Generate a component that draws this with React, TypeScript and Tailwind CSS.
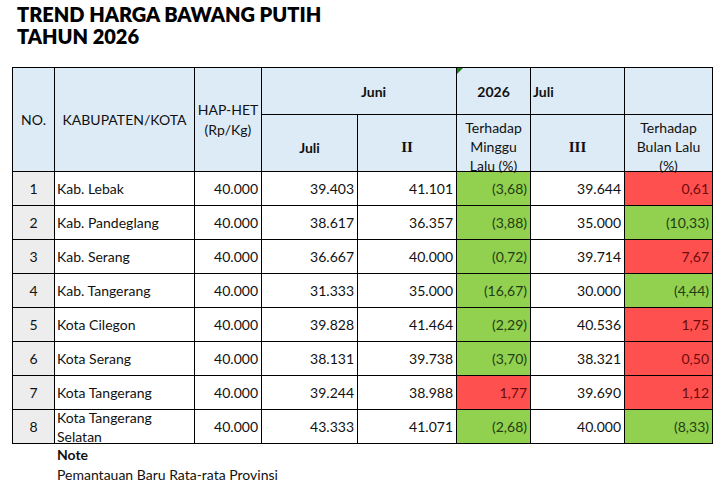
import React from "react";

type Row = {
  no: number;
  name: string[];
  hap: string;
  juli: string;
  ii: string;
  mg: string;
  mgUp: boolean;
  iii: string;
  bl: string;
  blUp: boolean;
};

const rows: Row[] = [
  { no: 1, name: ["Kab. Lebak"], hap: "40.000", juli: "39.403", ii: "41.101", mg: "(3,68)", mgUp: false, iii: "39.644", bl: "0,61", blUp: true },
  { no: 2, name: ["Kab. Pandeglang"], hap: "40.000", juli: "38.617", ii: "36.357", mg: "(3,88)", mgUp: false, iii: "35.000", bl: "(10,33)", blUp: false },
  { no: 3, name: ["Kab. Serang"], hap: "40.000", juli: "36.667", ii: "40.000", mg: "(0,72)", mgUp: false, iii: "39.714", bl: "7,67", blUp: true },
  { no: 4, name: ["Kab. Tangerang"], hap: "40.000", juli: "31.333", ii: "35.000", mg: "(16,67)", mgUp: false, iii: "30.000", bl: "(4,44)", blUp: false },
  { no: 5, name: ["Kota Cilegon"], hap: "40.000", juli: "39.828", ii: "41.464", mg: "(2,29)", mgUp: false, iii: "40.536", bl: "1,75", blUp: true },
  { no: 6, name: ["Kota Serang"], hap: "40.000", juli: "38.131", ii: "39.738", mg: "(3,70)", mgUp: false, iii: "38.321", bl: "0,50", blUp: true },
  { no: 7, name: ["Kota Tangerang"], hap: "40.000", juli: "39.244", ii: "38.988", mg: "1,77", mgUp: true, iii: "39.690", bl: "1,12", blUp: true },
  { no: 8, name: ["Kota Tangerang", "Selatan"], hap: "40.000", juli: "43.333", ii: "41.071", mg: "(2,68)", mgUp: false, iii: "40.000", bl: "(8,33)", blUp: false },
];

const font = { fontFamily: "Lato, 'Open Sans', sans-serif" };

function pctCls(up: boolean) {
  return up ? "bg-[#ff5050] text-[#6e0a0a]" : "bg-[#92d050] text-[#1f3d12]";
}

export default function App() {
  const b = "border border-black";
  return (
    <div className="w-[723px] h-[485px] bg-white text-[#111] overflow-hidden" style={font}>
      <div className="pl-[17px] pt-[3px] text-[20px] font-extrabold leading-[22px] text-black">
        <div>TREND HARGA BAWANG PUTIH</div>
        <div>TAHUN 2026</div>
      </div>
      <div className="pl-[12px] pt-[20px]">
        <table className="border-collapse table-fixed text-[14px] w-[700px]">
          <colgroup>
            <col className="w-[42px]" />
            <col className="w-[140px]" />
            <col className="w-[67px]" />
            <col className="w-[96px]" />
            <col className="w-[99px]" />
            <col className="w-[74px]" />
            <col className="w-[94px]" />
            <col className="w-[88px]" />
          </colgroup>
          <thead>
            <tr className="h-[47px] bg-[#ddebf7]">
              <th rowSpan={2} className={`${b} font-normal text-center`}>NO.</th>
              <th rowSpan={2} className={`${b} font-normal text-center`}>KABUPATEN/KOTA</th>
              <th rowSpan={2} className={`${b} font-normal text-center leading-[20px]`}>
                HAP-HET
                <br />
                (Rp/Kg)
              </th>
              <th colSpan={2} className={`${b} font-bold text-left pl-[99px]`}>Juni</th>
              <th className={`${b} font-bold text-center relative`}>
                <span className="absolute left-0 top-0 w-0 h-0 border-t-[6px] border-r-[6px] border-t-[#1e7b1e] border-r-transparent" />
                2026
              </th>
              <th className={`${b} font-bold text-left pl-[2px]`}>Juli</th>
              <th className={`${b}`}></th>
            </tr>
            <tr className="h-[57px] bg-[#ddebf7]">
              <th className={`${b} font-bold text-center pt-[8px]`}>Juli</th>
              <th className={`${b} font-bold text-center pt-[8px] text-[15px]`} style={{ fontFamily: "'Liberation Serif', serif" }}>II</th>
              <th className={`${b} font-normal text-center leading-[19px] align-bottom pt-[2px]`}>
                <div className="-mb-[4px]">
                  Terhadap
                  <br />
                  Minggu
                  <br />
                  Lalu (%)
                </div>
              </th>
              <th className={`${b} font-bold text-center pt-[8px] text-[15px]`} style={{ fontFamily: "'Liberation Serif', serif" }}>III</th>
              <th className={`${b} font-normal text-center leading-[19px] align-bottom pt-[2px]`}>
                <div className="-mb-[4px]">
                  Terhadap
                  <br />
                  Bulan Lalu
                  <br />
                  (%)
                </div>
              </th>
            </tr>
          </thead>
          <tbody>
            {rows.map((r) => (
              <tr key={r.no} className="h-[34px]">
                <td className={`${b} bg-[#ededed] text-center`}>{r.no}</td>
                <td className={`${b} pl-[2px] p-0`}>
                  <div className={`${r.name.length > 1 ? "-my-[3px]" : ""} leading-[19px]`}>
                    {r.name.map((n, i) => (
                      <div key={i}>{n}</div>
                    ))}
                  </div>
                </td>
                <td className={`${b} text-right pr-[3px]`}>{r.hap}</td>
                <td className={`${b} text-right pr-[3px]`}>{r.juli}</td>
                <td className={`${b} text-right pr-[3px]`}>{r.ii}</td>
                <td className={`${b} text-right pr-[3px] ${pctCls(r.mgUp)}`}>{r.mg}</td>
                <td className={`${b} text-right pr-[3px]`}>{r.iii}</td>
                <td className={`${b} text-right pr-[3px] ${pctCls(r.blUp)}`}>{r.bl}</td>
              </tr>
            ))}
          </tbody>
        </table>
      </div>
      <div className="pl-[57px] pt-[1px] text-[14px] leading-[20px]">
        <div className="font-bold">Note</div>
        <div>Pemantauan Baru Rata-rata Provinsi</div>
      </div>
    </div>
  );
}
